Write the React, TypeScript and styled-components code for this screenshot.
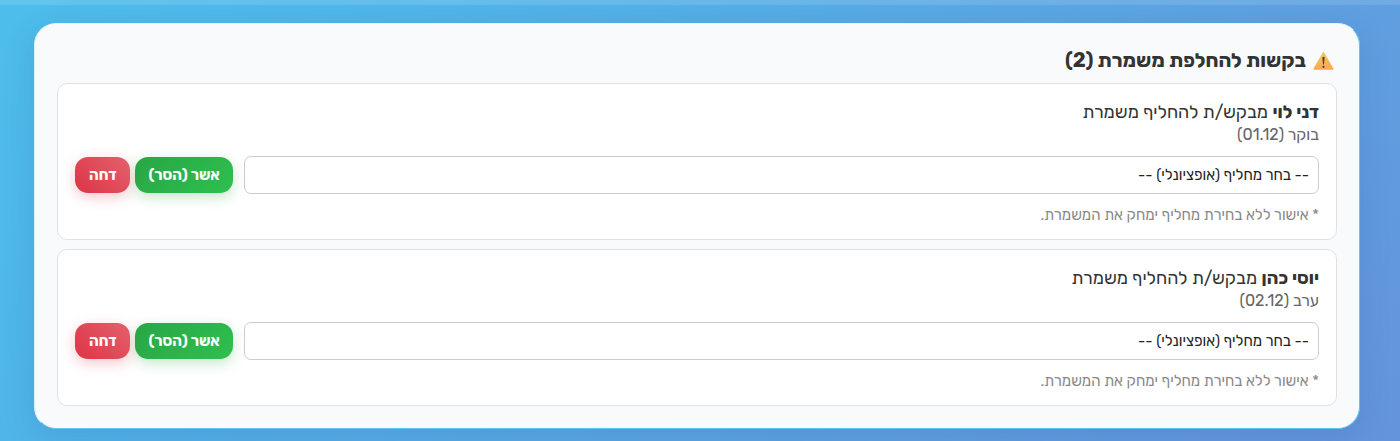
import React from 'react';
import styled, { createGlobalStyle } from 'styled-components';

const GlobalStyle = createGlobalStyle`
  *, *::before, *::after { box-sizing: border-box; }
  html { min-height: 100%; display: flex; flex-direction: column; }
  body {
    margin: 0;
    flex: 1;
    font-family: Rubik, 'Open Sans', 'Liberation Sans', sans-serif;
    color: #333;
    background: linear-gradient(135deg, #4dbeeb 0%, #50b5e9 25%, #5f9fe0 75%, #6494dc 100%);
  }
`;

const Page = styled.div`
  border-top: 5px solid rgba(255, 255, 255, 0.12);
  padding: 18px 40px 12px 34px;
`;

const Panel = styled.section`
  padding: 21px 22px 22px;
  border: 1px solid #5cc8ea;
  border-top-color: #e4f4fb;
  border-left-color: #d9f0fa;
  border-radius: 22px;
  background: #f8fafc;
  box-shadow: 0 8px 32px rgba(31, 60, 135, 0.15);
`;

const Heading = styled.h2`
  display: flex;
  align-items: center;
  gap: 7px;
  margin: 0 3px 8px;
  font-size: 20px;
  line-height: 30px;
  font-weight: 700;
`;

const RequestList = styled.div`
  display: flex;
  flex-direction: column;
  gap: 9px;
`;

const Card = styled.article`
  padding: 17px 17px 14px;
  border: 1px solid #dfe2e5;
  border-radius: 10px;
  background: #fff;
`;

const Summary = styled.p`
  margin: 0;
  font-size: 18px;
  line-height: 23px;
`;

const Shift = styled.p`
  margin: 0;
  font-size: 16px;
  line-height: 22px;
  color: #666;
`;

const Actions = styled.div`
  display: flex;
  align-items: center;
  gap: 11px;
  margin-top: 10px;
`;

const Substitute = styled.select`
  flex: 1;
  min-width: 0;
  height: 38px;
  padding: 0 9px;
  appearance: none;
  border: 1px solid #ccc;
  border-radius: 7px;
  background: #fff;
  color: #222;
  font-family: inherit;
  font-size: 15px;
`;

const Buttons = styled.div`
  display: flex;
  gap: 5px;
`;

const Button = styled.button<{ $tone: 'approve' | 'reject' }>`
  height: 36px;
  padding: 0 13px 0 14px;
  border: 0;
  border-radius: 13px;
  color: #fff;
  font-family: inherit;
  font-size: 15px;
  font-weight: 700;
  white-space: nowrap;
  background: ${({ $tone }) =>
    $tone === 'approve'
      ? 'linear-gradient(135deg, #28a745, #2fbf4f)'
      : 'linear-gradient(45deg, #dc3545, #e4606d)'};
  box-shadow: 0 4px 14px
    ${({ $tone }) => ($tone === 'approve' ? 'rgba(40, 167, 69, 0.28)' : 'rgba(220, 53, 69, 0.28)')};
`;

const Hint = styled.p`
  margin: 11px 0 0;
  font-size: 15px;
  line-height: 20px;
  color: #888;
`;

const WarningIcon = () => (
  <svg width="21" height="20" viewBox="0 0 21 20" aria-hidden="true">
    <defs>
      <linearGradient id="warning-fill" x1="0" y1="0" x2="0" y2="1">
        <stop offset="0" stopColor="#f3c766" />
        <stop offset="1" stopColor="#fba84b" />
      </linearGradient>
    </defs>
    <path d="M9.8 2.5Q10.5 1.4 11.2 2.5L20.4 18.6Q20.9 19.8 19.7 19.8H1.3Q.1 19.8 .6 18.6Z" fill="url(#warning-fill)" />
    <path d="M9.4 7.2Q10.5 6.2 11.6 7.2L11 14.4H10Z" fill="#40424a" />
    <circle cx="10.5" cy="16.8" r="1.1" fill="#40424a" />
  </svg>
);

const requests = [
  { name: 'דני לוי', shift: 'בוקר (01.12)' },
  { name: 'יוסי כהן', shift: 'ערב (02.12)' },
];

export default function App() {
  return (
    <Page dir="rtl" lang="he">
      <GlobalStyle />
      <Panel>
        <Heading>
          <WarningIcon />
          <span>בקשות להחלפת משמרת ({requests.length})</span>
        </Heading>
        <RequestList>
          {requests.map(({ name, shift }) => (
            <Card key={name}>
              <Summary>
                <strong>{name}</strong> מבקש/ת להחליף משמרת
              </Summary>
              <Shift>{shift}</Shift>
              <Actions>
                <Substitute aria-label={`מחליף עבור ${name}`}>
                  <option>-- בחר מחליף (אופציונלי) --</option>
                </Substitute>
                <Buttons>
                  <Button type="button" $tone="approve">אשר (הסר)</Button>
                  <Button type="button" $tone="reject">דחה</Button>
                </Buttons>
              </Actions>
              <Hint>* אישור ללא בחירת מחליף ימחק את המשמרת.</Hint>
            </Card>
          ))}
        </RequestList>
      </Panel>
    </Page>
  );
}
